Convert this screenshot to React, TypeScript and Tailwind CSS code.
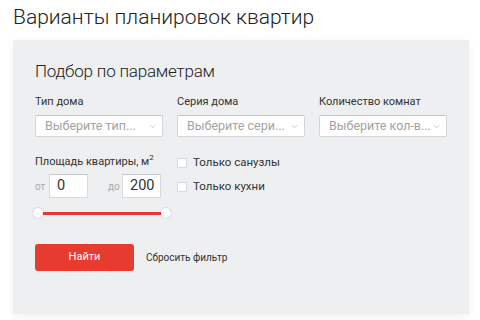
import { ChevronDown } from 'lucide-react'

const SELECTS = [
  { label: 'Тип дома', placeholder: 'Выберите тип...' },
  { label: 'Серия дома', placeholder: 'Выберите сери...' },
  { label: 'Количество комнат', placeholder: 'Выберите кол-в...' },
]

function Select({ label, placeholder }: { label: string; placeholder: string }) {
  return (
    <div className="w-[128px]">
      <div className="text-[11px] leading-[14px] text-[#333] whitespace-nowrap">{label}</div>
      <div className="mt-[6px] h-[22px] bg-white border border-[#d4d5d8] border-t-[#c2c3c6] rounded-[2px] flex items-center pl-[9px] pr-[5px]">
        <span className="flex-1 text-[12.5px] text-[#a3a3a3] whitespace-nowrap">{placeholder}</span>
        <ChevronDown size={9} strokeWidth={1.5} className="text-[#a0a0a0] shrink-0" />
      </div>
    </div>
  )
}

function NumInput({ prefix, value }: { prefix: string; value: string }) {
  return (
    <div className="flex items-center">
      <span className="w-[14px] text-[10px] text-[#aaa]">{prefix}</span>
      <div className="w-[39px] h-[24px] bg-white border border-[#d9dadd] border-t-[#c4c5c8] rounded-[1px] flex items-center pl-[7px] text-[14.5px] text-[#333]">
        {value}
      </div>
    </div>
  )
}

function Check({ label }: { label: string }) {
  return (
    <label className="flex items-center gap-[6px] h-[14px]">
      <span className="w-[10px] h-[10px] bg-white border border-[#d6d7da] rounded-[1px]" />
      <span className="text-[11.5px] text-[#333]">{label}</span>
    </label>
  )
}

export default function App() {
  return (
    <div className="w-[480px] h-[320px] bg-white overflow-hidden" style={{ fontFamily: 'Roboto, "Liberation Sans", sans-serif' }}>
      <h1 className="pl-[13px] pt-[5px] h-[40px] text-[21px] leading-[25px] font-light text-[#222]">
        Варианты планировок квартир
      </h1>
      <div className="ml-[13px] w-[456px] bg-[#eeeff1] px-[22px] pt-[20px] pb-[43px] shadow-[0_3px_8px_rgba(0,0,0,0.06)]">
        <h2 className="text-[17px] leading-[22px] font-light tracking-[-0.2px] text-[#222]">Подбор по параметрам</h2>

        <div className="mt-[13px] flex gap-[14px]">
          {SELECTS.map((s) => (
            <Select key={s.label} {...s} />
          ))}
        </div>

        <div className="mt-[18px] flex gap-[14px]">
          <div className="w-[128px]">
            <div className="h-[14px] text-[11px] leading-[14px] text-[#333] whitespace-nowrap">
              Площадь квартиры, м<span className="relative -top-[5px] text-[8px] leading-none">2</span>
            </div>
            <div className="mt-[5px] flex gap-[20px]">
              <NumInput prefix="от" value="0" />
              <NumInput prefix="до" value="200" />
            </div>
            <div className="relative mt-[10px] h-[10px] w-[138px] -ml-[2px]">
              <div className="absolute left-[5px] right-[5px] top-[3.5px] h-[3px] bg-[#e53935]" />
              <span className="absolute left-0 top-0 w-[10px] h-[10px] rounded-full bg-white shadow-[0_0_2px_rgba(0,0,0,0.25)]" />
              <span className="absolute right-0 top-0 w-[10px] h-[10px] rounded-full bg-white shadow-[0_0_2px_rgba(0,0,0,0.25)]" />
            </div>
          </div>
          <div className="pt-[1px] flex flex-col gap-[10px]">
            <Check label="Только санузлы" />
            <Check label="Только кухни" />
          </div>
        </div>

        <div className="mt-[26px] flex items-center gap-[12px]">
          <button className="w-[99px] h-[27px] rounded-[3px] bg-[#e83b30] text-white text-[11px]">Найти</button>
          <button className="text-[10px] text-[#333]">Сбросить фильтр</button>
        </div>
      </div>
    </div>
  )
}
